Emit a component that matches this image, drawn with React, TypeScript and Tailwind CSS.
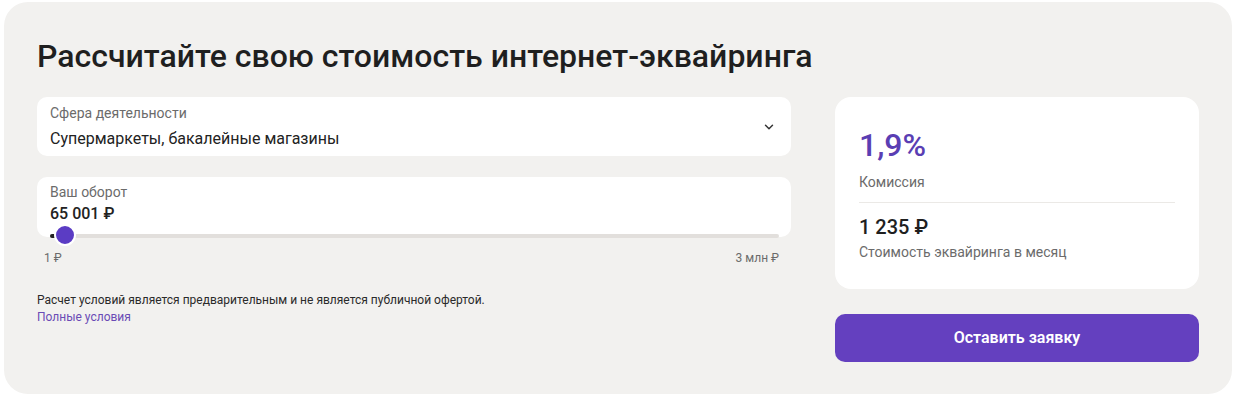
import { ChevronDown } from "lucide-react";

export default function App() {
  return (
    <div className="min-h-[401px] bg-white px-[4px] pt-[2px] font-['Roboto',_sans-serif]">
      <div className="flex h-[392px] flex-col rounded-[24px] bg-[#f2f1ef] px-[33px] pt-[33px]">
        <h1 className="text-[32px] font-medium leading-[42px] text-[#1f1f1f]">
          Рассчитайте свою стоимость интернет-эквайринга
        </h1>

        <div className="mt-[20px] flex gap-[44px]">
          {/* left column */}
          <div className="w-[754px]">
            <div className="flex h-[59px] items-center justify-between rounded-[10px] bg-white pl-[13px] pr-[15px]">
              <div className="flex flex-col">
                <span className="text-[14px] leading-[18px] text-[#6b6b6b]">Сфера деятельности</span>
                <span className="mt-[7px] text-[16px] leading-[20px] text-[#222]">
                  Супермаркеты, бакалейные магазины
                </span>
              </div>
              <ChevronDown size={14} strokeWidth={2.5} className="text-[#333]" />
            </div>

            <div className="relative mt-[21px] h-[60px] rounded-[10px] bg-white pl-[13px] pt-[6px]">
              <div className="text-[14px] leading-[18px] text-[#6b6b6b]">Ваш оборот</div>
              <div className="mt-[3px] text-[16px] font-medium leading-[20px] text-[#222]">65 001 ₽</div>
              {/* slider */}
              <div className="absolute bottom-[-1px] left-[13px] right-[12px] h-[4px] rounded-full bg-[#e2dfdc]">
                <div className="absolute left-0 top-0 h-[4px] w-[14px] rounded-full bg-[#222]" />
                <div className="absolute left-[4px] top-[-10px] h-[22px] w-[22px] rounded-full border-[2px] border-white bg-[#5b3cc4]" />
              </div>
            </div>

            <div className="mt-[13px] flex justify-between pl-[7px] pr-[12px] text-[12px] leading-[16px] text-[#6b6b6b]">
              <span>1 ₽</span>
              <span>3 млн ₽</span>
            </div>

            <p className="mt-[25px] text-[12px] leading-[18px] text-[#2a2a2a]">
              Расчет условий является предварительным и не является публичной офертой.
            </p>
            <a className="block text-[12px] leading-[17px] text-[#6a4bb5]">Полные условия</a>
          </div>

          {/* right column */}
          <div className="flex w-[364px] flex-col">
            <div className="h-[192px] rounded-[16px] bg-white px-[24px] pt-[28px]">
              <div className="text-[32px] font-medium leading-[40px] text-[#5a3eb3]">1,9%</div>
              <div className="mt-[8px] text-[14px] leading-[18px] text-[#6b6b6b]">Комиссия</div>
              <div className="mt-[11px] border-t border-[#ebe9e6]" />
              <div className="mt-[11px] text-[20px] font-medium leading-[26px] text-[#1f1f1f]">1 235 ₽</div>
              <div className="mt-[3px] text-[14px] leading-[18px] text-[#6b6b6b]">
                Стоимость эквайринга в месяц
              </div>
            </div>
            <button className="mt-[25px] h-[48px] rounded-[10px] bg-[#6440bf] text-[16px] font-semibold text-white">
              Оставить заявку
            </button>
          </div>
        </div>
      </div>
    </div>
  );
}
